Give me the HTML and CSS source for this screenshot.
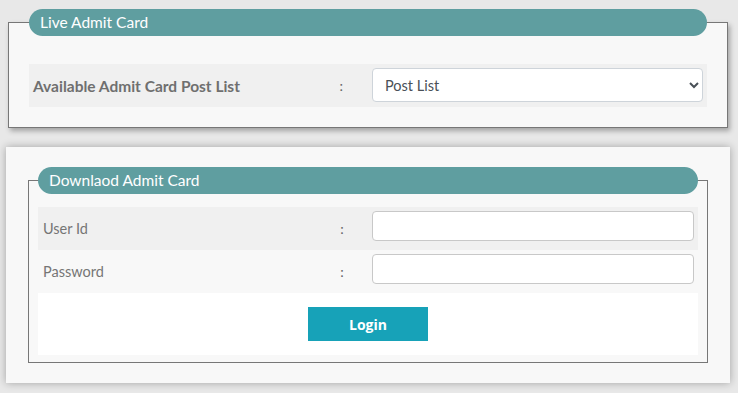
FILE: index.html
```html
<!DOCTYPE html>
<html>
<head>
<meta charset="utf-8">
<link rel="stylesheet" href="styles.css">
</head>
<body>
<div class="page">
  <div class="fs fs-live">
    <div class="legend legend-live">Live Admit Card</div>
    <div class="row row-grey row-live">
      <div class="label label-bold">Available Admit Card Post List</div>
      <div class="colon">:</div>
      <div class="field">
        <select class="select"><option>Post List</option></select>
      </div>
    </div>
  </div>

  <div class="card">
    <div class="fs fs-dl">
      <div class="legend legend-dl">Downlaod Admit Card</div>
      <div class="row row-grey">
        <div class="label">User Id</div>
        <div class="colon">:</div>
        <div class="field"><input class="input" type="text"></div>
      </div>
      <div class="row row-light">
        <div class="label">Password</div>
        <div class="colon">:</div>
        <div class="field"><input class="input" type="password"></div>
      </div>
      <div class="row-btn">
        <button class="btn">Login</button>
      </div>
    </div>
  </div>
</div>
</body>
</html>
```

FILE: styles.css
```css
* { box-sizing: border-box; }
html, body { margin: 0; padding: 0; }
body {
  background: #e8e8e8;
  font-family: "Source Sans Pro", Lato, "Noto Sans", sans-serif;
  width: 738px;
  height: 393px;
  overflow: hidden;
}
.page {
  padding-top: 22px;
}
.fs {
  border: 1px solid #777;
  background: #f8f8f8;
}
.fs-live {
  margin-left: 8px;
  width: 720px;
  height: 106px;
  padding: 0 20px 0 20px;
  box-shadow: 2px 3px 5px rgba(0,0,0,0.3);
}
.legend {
  height: 27px;
  margin-top: -14px;
  background: #5f9ea0;
  color: #fff;
  border-radius: 14px;
  font-size: 15.5px;
  line-height: 27px;
  padding-left: 11px;
}
.row {
  display: flex;
  align-items: center;
  height: 43px;
}
.row-live { margin-top: 28px; }
.row-grey { background: #f0f0f0; }
.row-light { background: #f8f8f8; }
.label {
  width: 45.8%;
  flex: none;
  padding-left: 5px;
  color: #757575;
  font-size: 14.5px;
}
.label-bold {
  font-weight: bold;
  font-size: 15.5px;
  padding-left: 4px;
  color: #6f6f6f;
}
.colon {
  width: 4.8%;
  flex: none;
  color: #666;
  font-size: 14px;
}
.field {
  flex: 1;
  padding: 4px 4px 5px 0;
  align-self: stretch;
}
.select {
  display: block;
  width: 100%;
  height: 34px;
  border: 1px solid #ced4da;
  border-radius: 4px;
  background: #fff;
  color: #495057;
  font-family: inherit;
  font-size: 14.5px;
  padding: 0 8px;
}
.input {
  display: block;
  width: 100%;
  height: 30px;
  border: 1px solid #c8c8c8;
  border-radius: 4px;
  background: #fff;
}
.card {
  margin: 19px 0 0 6px;
  width: 724px;
  height: 236px;
  background: #f8f8f8;
  box-shadow: 0 0 8px rgba(0,0,0,0.3);
  padding: 33px 22px 0 22px;
}
.fs-dl {
  height: 183px;
  padding: 0 9px 0 9px;
}
.legend-dl { margin-bottom: 13px; }
.row-btn {
  background: #fff;
  height: 62px;
  display: flex;
  justify-content: center;
  align-items: center;
}
.btn {
  width: 120px;
  height: 34px;
  background: #17a2b8;
  color: #fff;
  border: none;
  font-family: "Open Sans", sans-serif;
  font-weight: bold;
  font-size: 14px;
}
```
